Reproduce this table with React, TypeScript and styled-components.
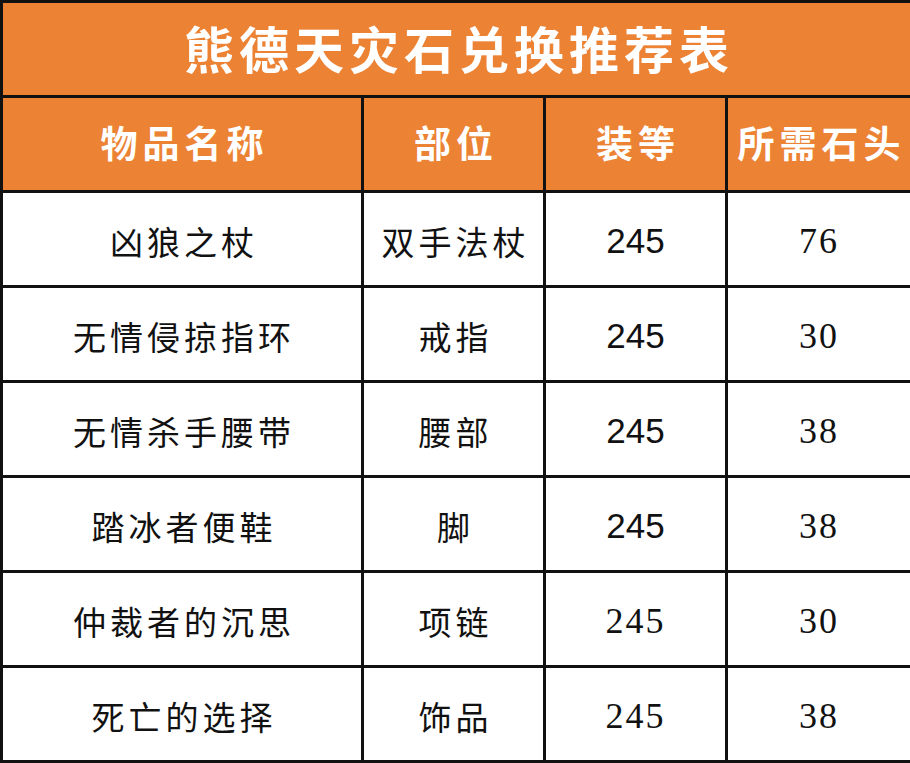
import React from 'react';
import styled, { createGlobalStyle } from 'styled-components';

const GlobalStyle = createGlobalStyle`
  html, body {
    margin: 0;
    padding: 0;
    background: #ffffff;
  }
`;

interface TItem {
  name: string;
  slot: string;
  level: string;
  stones: string;
  boldLevel: boolean;
}

const items: TItem[] = [
  { name: '凶狼之杖', slot: '双手法杖', level: '245', stones: '76', boldLevel: true },
  { name: '无情侵掠指环', slot: '戒指', level: '245', stones: '30', boldLevel: true },
  { name: '无情杀手腰带', slot: '腰部', level: '245', stones: '38', boldLevel: true },
  { name: '踏冰者便鞋', slot: '脚', level: '245', stones: '38', boldLevel: true },
  { name: '仲裁者的沉思', slot: '项链', level: '245', stones: '30', boldLevel: false },
  { name: '死亡的选择', slot: '饰品', level: '245', stones: '38', boldLevel: false },
];

const ORANGE = '#ec8233';
const cjk = '"Noto Sans CJK SC", "Noto Sans", sans-serif';

const Table = styled.table`
  width: 910px;
  border-collapse: collapse;
  table-layout: fixed;
  border: 3px solid #111;
`;

const Cell = styled.td`
  border: 3px solid #111;
  height: 95px;
  box-sizing: border-box;
  padding: 0;
  text-align: center;
  vertical-align: middle;
`;

const TitleCell = styled(Cell)`
  background: ${ORANGE};
  color: #fff;
  font-family: ${cjk};
  font-weight: 700;
  font-size: 50px;
  letter-spacing: 5px;
  padding-left: 5px;
  padding-bottom: 4px;
`;

const HeadCell = styled(Cell)`
  background: ${ORANGE};
  color: #fff;
  font-family: ${cjk};
  font-weight: 700;
  font-size: 37px;
  letter-spacing: 5px;
  padding-left: 5px;
  padding-bottom: 4px;
`;

const TextCell = styled(Cell)`
  background: #fff;
  color: #111;
  font-family: ${cjk};
  font-weight: 400;
  font-size: 33px;
  letter-spacing: 4px;
  padding-left: 4px;
  padding-top: 4px;
`;

const NumberCell = styled(Cell)<{ $bold?: boolean }>`
  background: #fff;
  color: #111;
  font-family: ${({ $bold }) =>
    $bold ? '"Liberation Sans", Arial, sans-serif' : '"Liberation Serif", serif'};
  font-size: ${({ $bold }) => ($bold ? '35px' : '36px')};
  letter-spacing: ${({ $bold }) => ($bold ? '0' : '2px')};
  padding-top: 4px;
`;

export default function App() {
  return (
    <>
      <GlobalStyle />
      <Table>
        <colgroup>
          <col style={{ width: 361 }} />
          <col style={{ width: 182 }} />
          <col style={{ width: 182 }} />
          <col style={{ width: 185 }} />
        </colgroup>
        <thead>
          <tr>
            <TitleCell colSpan={4}>熊德天灾石兑换推荐表</TitleCell>
          </tr>
          <tr>
            <HeadCell>物品名称</HeadCell>
            <HeadCell>部位</HeadCell>
            <HeadCell>装等</HeadCell>
            <HeadCell>所需石头</HeadCell>
          </tr>
        </thead>
        <tbody>
          {items.map((item) => (
            <tr key={item.name}>
              <TextCell>{item.name}</TextCell>
              <TextCell>{item.slot}</TextCell>
              <NumberCell $bold={item.boldLevel}>{item.level}</NumberCell>
              <NumberCell>{item.stones}</NumberCell>
            </tr>
          ))}
        </tbody>
      </Table>
    </>
  );
}
